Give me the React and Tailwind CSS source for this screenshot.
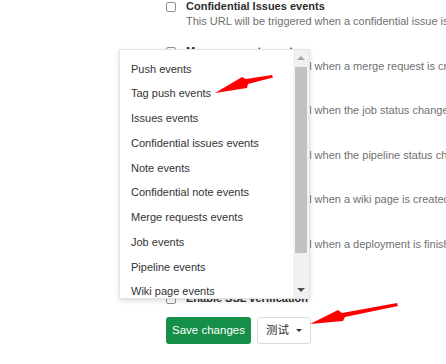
import React from "react";

const rows = [
  ["Confidential Issues events", "This URL will be triggered when a confidential issue is created/updated/merged"],
  ["Merge request events", "This URL will be triggered when a merge request is created/updated/merged"],
  ["Job events", "This URL will be triggered when the job status changes"],
  ["Pipeline events", "This URL will be triggered when the pipeline status changes"],
  ["Wiki Page events", "This URL will be triggered when a wiki page is created/updated"],
  ["Deployment events", "This URL will be triggered when a deployment is finished"],
];

const items = [
  "Push events",
  "Tag push events",
  "Issues events",
  "Confidential issues events",
  "Note events",
  "Confidential note events",
  "Merge requests events",
  "Job events",
  "Pipeline events",
  "Wiki page events",
  "Deployment events",
];

function Check() {
  return <div className="mt-[3px] w-[10px] h-[10px] shrink-0 border border-[#8f8f8f] rounded-[2px] bg-white" />;
}

function Row({ title, desc }) {
  return (
    <div className="flex items-start gap-[10px]">
      <Check />
      <div className="flex flex-col">
        <div className="leading-[15px] font-bold text-[#2e2e2e] whitespace-nowrap">{title}</div>
        {desc && <div className="leading-[15px] text-[#707070] whitespace-nowrap">{desc}</div>}
      </div>
    </div>
  );
}

export default function App() {
  return (
    <div className="relative w-[446px] h-[364px] overflow-hidden bg-white text-[11px] font-['Liberation_Sans',Arial,sans-serif]">
      <div className="flex flex-col pl-[166px] mt-[-1px]">
        <div className="flex flex-col gap-[14.5px]">
          {rows.map(([t, d]) => (
            <Row key={t} title={t} desc={d} />
          ))}
        </div>
        <div className="mt-[39px]">
          <Row title="Enable SSL verification" />
        </div>
        <div className="mt-[11.5px] flex gap-[6px]">
          <button className="w-[85px] h-[27px] rounded-[3px] bg-[#168f48] text-white text-[11.5px] flex items-center justify-center">
            Save changes
          </button>
          <button className="w-[54px] h-[27px] rounded-[3px] border border-[#dbdbdb] bg-white flex items-center pl-[8px] gap-[7px] text-[#333]">
            <span className="text-[11.5px] font-['Liberation_Sans','Noto_Sans_CJK_SC',sans-serif]">测试</span>
            <span className="w-0 h-0 border-l-[3px] border-r-[3px] border-t-[3px] border-l-transparent border-r-transparent border-t-[#333]" />
          </button>
        </div>
      </div>

      <div className="absolute left-[119px] top-[49px] w-[191px] h-[250px] flex border border-[#e3e3e3] rounded-[2px] bg-white shadow-[0_2px_5px_rgba(0,0,0,0.15)] overflow-hidden">
        <div className="flex-1 pt-[6.5px] pl-[11px] overflow-hidden">
          {items.map((it) => (
            <div key={it} className="h-[24.75px] leading-[24.75px] text-[#333] whitespace-nowrap">
              {it}
            </div>
          ))}
        </div>
        <div className="w-[16px] flex flex-col bg-[#f1f1f1]">
          <div className="h-[16px] flex items-center justify-center">
            <span className="w-0 h-0 border-l-[4px] border-r-[4px] border-b-[4px] border-l-transparent border-r-transparent border-b-[#a3a3a3]" />
          </div>
          <div className="mt-[1px] mx-[2px] h-[186px] bg-[#c1c1c1]" />
          <div className="flex-1" />
          <div className="h-[16px] flex items-center justify-center">
            <span className="w-0 h-0 border-l-[4px] border-r-[4px] border-t-[4px] border-l-transparent border-r-transparent border-t-[#505050]" />
          </div>
        </div>
      </div>

      <svg className="absolute inset-0 w-[446px] h-[364px] pointer-events-none" viewBox="0 0 446 364">
        <polygon fill="#ff0000" points="215,93 242,77 246,79 272,75 273,77.5 248,84 247,88" />
        <polygon fill="#ff0000" points="310,324 338,310 342,313 397,303 398,306 345,317 343,321" />
      </svg>
    </div>
  );
}
